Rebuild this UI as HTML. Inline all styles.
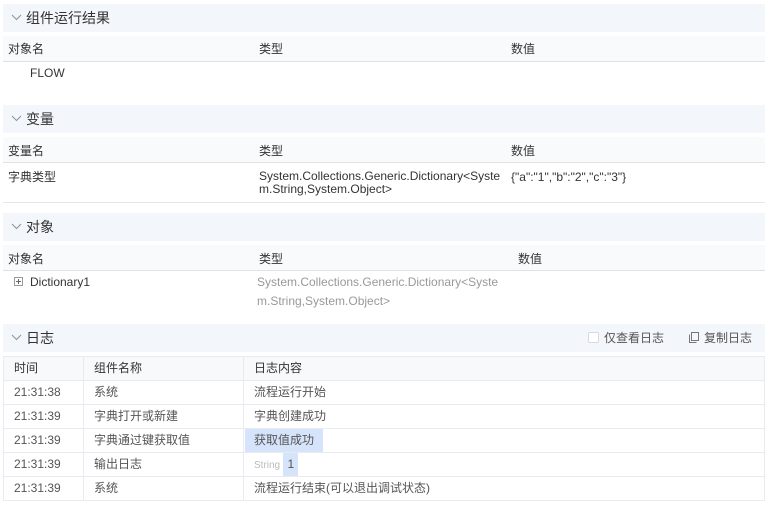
<!DOCTYPE html>
<html><head><meta charset="utf-8"><style>
*{margin:0;padding:0;box-sizing:border-box}
body{width:769px;height:505px;background:#fff;font-family:"Liberation Sans","Noto Sans CJK SC",sans-serif;font-size:12px;color:#333;position:relative;overflow:hidden}
.a{position:absolute;white-space:nowrap;line-height:14px}
.hd{position:absolute;left:3px;width:762px;height:28px;background:#f3f6fb}
.hd span{position:absolute;left:23px;top:6px;font-size:14px;line-height:16px;color:#333}
.hd svg{position:absolute;left:8px;top:10px}
.th{position:absolute;left:3px;width:762px;height:26px;background:#f9fafb;border-bottom:1px solid #dfe3e8}
.line{position:absolute;left:3px;width:762px;height:1px;background:#e4e7ea}
.lt{position:absolute;left:3px;top:356px;width:762px;border-collapse:collapse}
.lt td{border:1px solid #e8ecf0;height:24px;padding:0 0 1px 10px;color:#555;vertical-align:middle;line-height:14px}
.lt tr:first-child td{background:#f7f9fb;color:#333}
</style></head><body>

<div class="hd" style="top:4px"><svg width="11" height="7" viewBox="0 0 11 7"><path d="M1 1l4.5 4.5L10 1" fill="none" stroke="#8a93a0" stroke-width="1"/></svg><span>组件运行结果</span></div>
<div class="th" style="top:36px"></div>
<div class="a" style="left:8px;top:42px">对象名</div>
<div class="a" style="left:259px;top:42px">类型</div>
<div class="a" style="left:511px;top:42px">数值</div>
<div class="a" style="left:30px;top:66px">FLOW</div>

<div class="hd" style="top:105px"><svg width="11" height="7" viewBox="0 0 11 7"><path d="M1 1l4.5 4.5L10 1" fill="none" stroke="#8a93a0" stroke-width="1"/></svg><span>变量</span></div>
<div class="th" style="top:137px"></div>
<div class="a" style="left:8px;top:144px">变量名</div>
<div class="a" style="left:259px;top:144px">类型</div>
<div class="a" style="left:511px;top:144px">数值</div>
<div class="a" style="left:8px;top:170px">字典类型</div>
<div class="a" style="left:259px;top:170px;line-height:13px">System.Collections.Generic.Dictionary&lt;Syste<br>m.String,System.Object&gt;</div>
<div class="a" style="left:511px;top:170px">{"a":"1","b":"2","c":"3"}</div>
<div class="line" style="top:202px"></div>

<div class="hd" style="top:213px"><svg width="11" height="7" viewBox="0 0 11 7"><path d="M1 1l4.5 4.5L10 1" fill="none" stroke="#8a93a0" stroke-width="1"/></svg><span>对象</span></div>
<div class="th" style="top:245px"></div>
<div class="a" style="left:8px;top:252px">对象名</div>
<div class="a" style="left:259px;top:252px">类型</div>
<div class="a" style="left:518px;top:252px">数值</div>
<svg class="a" style="left:14px;top:277px" width="9" height="9" viewBox="0 0 9 9"><rect x=".5" y=".5" width="8" height="8" fill="#fff" stroke="#999"/><path d="M2 4.5h5M4.5 2v5" stroke="#666"/></svg>
<div class="a" style="left:30px;top:275px">Dictionary1</div>
<div class="a" style="left:257px;top:273px;line-height:19px;color:#999">System.Collections.Generic.Dictionary&lt;Syste<br>m.String,System.Object&gt;</div>

<div class="hd" style="top:324px"><svg width="11" height="7" viewBox="0 0 11 7"><path d="M1 1l4.5 4.5L10 1" fill="none" stroke="#8a93a0" stroke-width="1"/></svg><span>日志</span></div>
<div class="a" style="left:588px;top:332px;width:11px;height:11px;border:1px solid #d6d9de;background:#fff;border-radius:2px"></div>
<div class="a" style="left:604px;top:331px;color:#555">仅查看日志</div>
<svg class="a" style="left:689px;top:332px" width="10" height="11" viewBox="0 0 10 11"><rect x="2.5" y=".5" width="7" height="8" fill="none" stroke="#777"/><path d="M.5 2.5v8h7" fill="none" stroke="#777"/></svg>
<div class="a" style="left:704px;top:331px;color:#555">复制日志</div>

<table class="lt">
<tr><td style="width:80px">时间</td><td style="width:160px">组件名称</td><td>日志内容</td></tr>
<tr><td>21:31:38</td><td>系统</td><td>流程运行开始</td></tr>
<tr><td>21:31:39</td><td>字典打开或新建</td><td>字典创建成功</td></tr>
<tr><td>21:31:39</td><td>字典通过键获取值</td><td style="padding:0 0 0 1px"><span style="display:inline-block;background:#d6e4fb;height:23px;line-height:22px;padding:0 9px;color:#555">获取值成功</span></td></tr>
<tr><td>21:31:39</td><td>输出日志</td><td style="padding:0 0 0 10px"><span style="font-size:10px;color:#bbb">String</span> <span style="display:inline-block;background:#d6e4fb;height:23px;line-height:22px;padding:0 4px;color:#555">1</span></td></tr>
<tr><td>21:31:39</td><td>系统</td><td>流程运行结束(可以退出调试状态)</td></tr>
</table>
</body></html>
